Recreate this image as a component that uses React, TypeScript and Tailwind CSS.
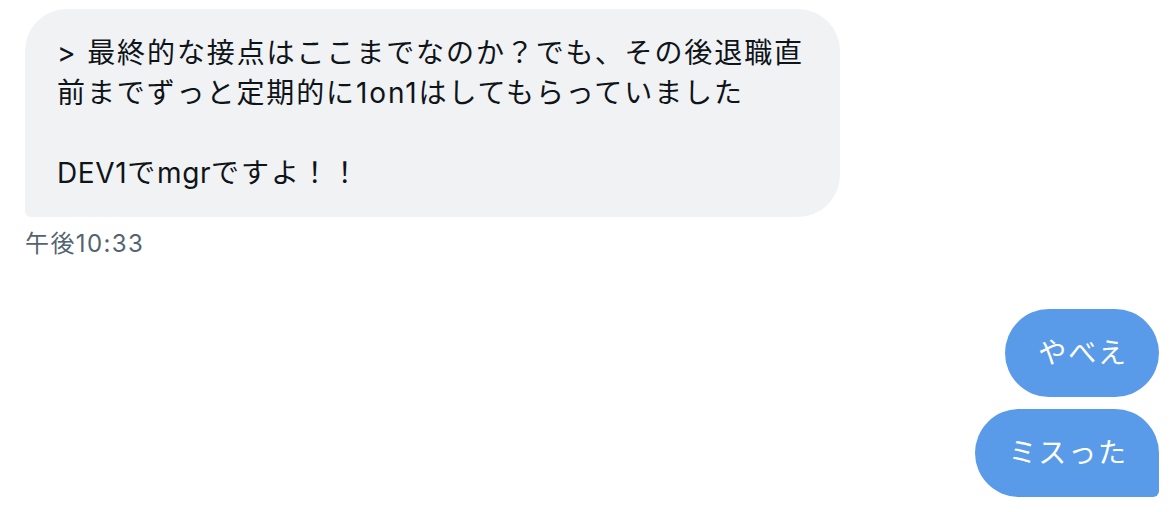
import React from "react";

export default function App() {
  const font = { fontFamily: 'Inter, "Noto Sans CJK JP", sans-serif' };
  return (
    <div className="w-[1174px] h-[512px] bg-white overflow-hidden pl-[25px] pr-[15px] pt-[9px] flex flex-col" style={font}>
      <div className="flex flex-col items-start">
        <div className="w-[815px] bg-[#f0f2f4] rounded-[42px] rounded-bl-[6px] pl-[32px] pr-[10px] py-[24px] text-[28px] leading-[40px] tracking-[1.9px] text-[#0f1419] whitespace-nowrap">
          &gt; 最終的な接点はここまでなのか？でも、その後退職直
          <br />
          前までずっと定期的に1on1はしてもらっていました
          <br />
          <br />
          <span className="tracking-[0.6px]">DEV1</span>で<span className="tracking-[0.6px]">mgr</span>ですよ！！
        </div>
        <div className="mt-[11px] text-[24px] leading-[32px] tracking-[1.4px] text-[#536471]">午後10:33</div>
      </div>
      <div className="mt-[49px] flex flex-col items-end gap-[12px]">
        <div className="bg-[#5a9be9] text-white text-[28px] leading-[40px] tracking-[1.9px] py-[24px] pl-[33px] pr-[31px] rounded-[44px]">
          やべえ
        </div>
        <div className="bg-[#5a9be9] text-white text-[28px] leading-[40px] tracking-[1.9px] py-[24px] pl-[33px] pr-[31px] rounded-[44px] rounded-br-[6px]">
          ミスった
        </div>
      </div>
    </div>
  );
}
